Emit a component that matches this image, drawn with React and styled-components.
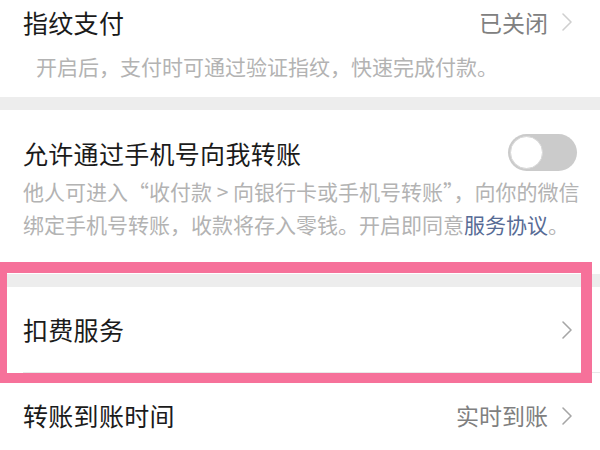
import React from "react";
import styled, { createGlobalStyle } from "styled-components";

const Global = createGlobalStyle`
  html, body { margin: 0; padding: 0; background: #ffffff; }
  body {
    width: 600px; height: 450px; overflow: hidden;
    font-family: "Noto Sans CJK SC", "Noto Sans", sans-serif;
  }
`;

const Page = styled.div`
  position: relative;
  width: 600px;
  height: 450px;
  overflow: hidden;
  background: #ffffff;
  display: flex;
  flex-direction: column;
`;

const Section = styled.div`
  background: #ffffff;
  padding: ${(p) => p.$pad || "0"};
  display: flex;
  flex-direction: column;
`;

const Band = styled.div`
  height: 13px;
  flex: none;
  background: #ededed;
`;

const Row = styled.div`
  display: flex;
  align-items: center;
  justify-content: space-between;
  height: ${(p) => p.$h}px;
  flex: none;
  padding: 0 23px 0 23px;
  box-sizing: border-box;
  position: relative;
`;

const Divider = styled.div`
  height: 1px;
  margin-left: 23px;
  background: #e8e8e8;
  flex: none;
`;

const Title = styled.span`
  font-size: 25px;
  color: #1b1b1b;
  line-height: 1;
  letter-spacing: 0.3px;
  position: relative;
  top: ${(p) => p.$shift || 0}px;
`;

const Right = styled.div`
  display: flex;
  align-items: center;
  gap: 13px;
  padding-right: 4px;
`;

const Value = styled.span`
  font-size: 23px;
  color: #808080;
  line-height: 1;
`;

const Desc = styled.p`
  margin: ${(p) => p.$margin || "0"};
  padding: 0 0 0 ${(p) => p.$indent || 23}px;
  font-size: 21px;
  line-height: ${(p) => p.$lh || 33}px;
  color: #b3b3b3;
  white-space: nowrap;
`;

const Link = styled.span`
  color: #576b95;
`;

const Track = styled.div`
  width: 69px;
  height: 37px;
  border-radius: 19px;
  background: #cbcbcb;
  position: relative;
  flex: none;
`;

const Knob = styled.div`
  position: absolute;
  left: 2px;
  top: 2px;
  width: 33px;
  height: 33px;
  border-radius: 50%;
  background: #ffffff;
  box-sizing: border-box;
  border: 1px solid #d8d8d8;
`;

const Highlight = styled.div`
  position: absolute;
  left: 0;
  top: 262px;
  width: 592px;
  height: 121px;
  box-sizing: border-box;
  border-style: solid;
  border-color: #f6719a;
  border-width: 11px 11px 10px 7px;
  pointer-events: none;
`;

const Chevron = ({ color = "#a6a6a6" }) => (
  <svg width="12" height="20" viewBox="0 0 12 20" fill="none">
    <polyline
      points="2,2 10,10 2,18"
      stroke={color}
      strokeWidth="1.6"
      strokeLinecap="round"
      strokeLinejoin="round"
    />
  </svg>
);

export default function App() {
  return (
    <>
      <Global />
      <Page>
        <Section>
          <Row $h={44}>
            <Title>指纹支付</Title>
            <Right>
              <Value>已关闭</Value>
              <Chevron color="#cfcfcf" />
            </Right>
          </Row>
          <Desc $indent={36} $margin="6px 0 14px">
            开启后，支付时可通过验证指纹，快速完成付款。
          </Desc>
        </Section>
        <Band />
        <Section $pad="23px 0 0">
          <Row $h={38}>
            <Title $shift={1}>允许通过手机号向我转账</Title>
            <Track>
              <Knob />
            </Track>
          </Row>
          <Desc $margin="4px 0 33px">
            他人可进入“收付款 &gt; 向银行卡或手机号转账”，向你的微信
            <br />
            绑定手机号转账，收款将存入零钱。开启即同意<Link>服务协议</Link>。
          </Desc>
        </Section>
        <Band />
        <Section>
          <Row $h={85}>
            <Title>扣费服务</Title>
            <Right>
              <Chevron />
            </Right>
          </Row>
          <Divider />
          <Row $h={85}>
            <Title>转账到账时间</Title>
            <Right>
              <Value>实时到账</Value>
              <Chevron />
            </Right>
          </Row>
        </Section>
        <Highlight />
      </Page>
    </>
  );
}
